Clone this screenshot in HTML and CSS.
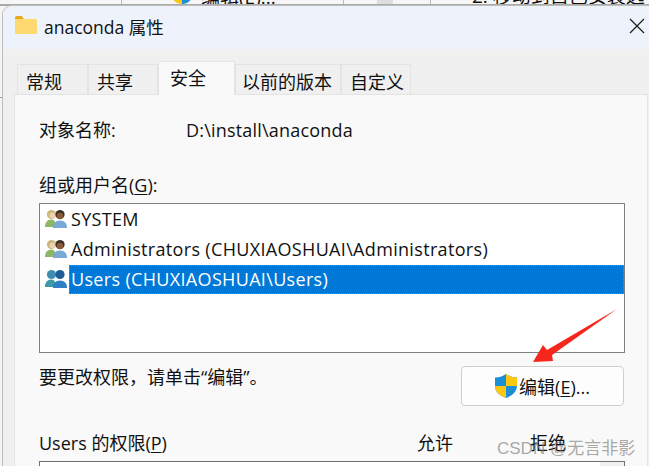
FILE: index.html
```html
<!DOCTYPE html>
<html>
<head>
  <title>anaconda 属性</title>
  <link rel="stylesheet" href="styles.css">
</head>
<body>
  <div class="behind">
    <span class="behind-line line-1"></span>
    <span class="behind-shield"></span>
    <span class="behind-edit">编辑(E)...</span>
    <span class="behind-line line-2"></span>
    <span class="behind-block"></span>
    <span class="behind-line line-3"></span>
    <span class="behind-step">2. 移动到自己安装选择</span>
  </div>
  <div class="behind-tick"></div>

  <div class="dialog">
    <div class="titlebar">
      <svg class="folder" width="22" height="18" viewBox="0 0 22 18">
        <path d="M0 1.5 Q0 0 1.5 0 H6.5 L8.5 2 V4 H0Z" fill="#eaa91c"/>
        <path d="M0 3 H20.5 Q22 3 22 4.5 V16.5 Q22 18 20.5 18 H1.5 Q0 18 0 16.5Z" fill="#fdd96f"/>
      </svg>
      <span class="title">anaconda 属性</span>
      <svg class="close" width="16" height="16" viewBox="0 0 16 16">
        <path d="M1 1 L15 15 M15 1 L1 15" stroke="#1a1a1a" stroke-width="1.2" fill="none"/>
      </svg>
    </div>

    <div class="tabs">
      <div class="tab tab-1">常规</div>
      <div class="tab tab-2">共享</div>
      <div class="tab tab-active">安全</div>
      <div class="tab tab-4">以前的版本</div>
      <div class="tab tab-5">自定义</div>
    </div>

    <div class="panel">
      <div class="object-row">
        <span class="object-label">对象名称:</span>
        <span class="object-path">D:\install\anaconda</span>
      </div>

      <div class="group-label">组或用户名(<u>G</u>):</div>
      <div class="user-list">
        <div class="user-row">
          <svg class="user-icon" width="22" height="20" viewBox="0 0 22 20">
            <circle cx="6.5" cy="5.5" r="4.6" fill="#cbb77a"/>
            <circle cx="7.5" cy="6.5" r="3" fill="#eed2ad"/>
            <path d="M0 18 Q0 10.5 6.5 10.5 Q11 10.5 11 18Z" fill="#8cb865"/>
            <circle cx="15" cy="5.5" r="4.6" fill="#3d3128"/>
            <circle cx="15" cy="7" r="3.2" fill="#8a5a3a"/>
            <path d="M8 19 Q8 11.5 15 11.5 Q22 11.5 22 19Z" fill="#79a9d6"/>
          </svg>
          <span class="user-name">SYSTEM</span>
        </div>
        <div class="user-row">
          <svg class="user-icon" width="22" height="20" viewBox="0 0 22 20">
            <circle cx="6.5" cy="5.5" r="4.6" fill="#cbb77a"/>
            <circle cx="7.5" cy="6.5" r="3" fill="#eed2ad"/>
            <path d="M0 18 Q0 10.5 6.5 10.5 Q11 10.5 11 18Z" fill="#8cb865"/>
            <circle cx="15" cy="5.5" r="4.6" fill="#3d3128"/>
            <circle cx="15" cy="7" r="3.2" fill="#8a5a3a"/>
            <path d="M8 19 Q8 11.5 15 11.5 Q22 11.5 22 19Z" fill="#79a9d6"/>
          </svg>
          <span class="user-name">Administrators (CHUXIAOSHUAI\Administrators)</span>
        </div>
        <div class="user-row">
          <svg class="user-icon" width="22" height="20" viewBox="0 0 22 20">
            <circle cx="6.5" cy="5.5" r="4.6" fill="#3f8db0"/>
            <path d="M0 18 Q0 10.5 6.5 10.5 Q11 10.5 11 18Z" fill="#3f9aa8"/>
            <circle cx="15" cy="5.5" r="4.6" fill="#1f5d96"/>
            <path d="M8 19 Q8 11.5 15 11.5 Q22 11.5 22 19Z" fill="#2f7fc4"/>
          </svg>
          <span class="user-name user-selected">Users (CHUXIAOSHUAI\Users)</span>
        </div>
      </div>

      <div class="edit-row">
        <span class="edit-hint">要更改权限，请单击“编辑”。</span>
        <button class="edit-button">
          <svg width="22" height="24" viewBox="0 0 22 24">
            <path d="M11 0 Q16 3.5 22 3.5 V12 Q22 20 11 24 Q0 20 0 12 V3.5 Q6 3.5 11 0Z" fill="#1b8fd6"/>
            <path d="M11 0 Q16 3.5 22 3.5 V12 H11Z" fill="#fdc80f"/>
            <path d="M0 12 H11 V24 Q0 20 0 12Z" fill="#fdc80f"/>
          </svg>
          <span>编辑(<u>E</u>)...</span>
        </button>
      </div>

      <div class="perm-head">
        <span class="perm-name">Users 的权限(<u>P</u>)</span>
        <span class="perm-allow">允许</span>
        <span class="perm-deny">拒绝</span>
      </div>
      <div class="perm-list">
        <div class="perm-scroll"></div>
      </div>
    </div>
  </div>

  <svg class="arrow" width="90" height="60" viewBox="0 0 90 60">
    <path d="M86 1 L21 47 L22 53 L2 54 L12 37 L16 42Z" fill="#f5261c"/>
  </svg>
  <div class="watermark">CSDN @无言非影</div>
</body>
</html>
```

FILE: styles.css
```css
html, body {
  margin: 0;
  padding: 0;
}
body {
  width: 649px;
  height: 466px;
  position: relative;
  overflow: hidden;
  background-color: #f4f4f4;
  font-family: "Open Sans", "Noto Sans CJK SC", sans-serif;
  font-size: 18px;
  color: #111;
}
u {
  text-underline-offset: 2px;
}
.behind {
  height: 4px;
  overflow: hidden;
  position: relative;
  border-bottom: 2px solid #a9a9a9;
  background-color: #f6f6f6;
}
.behind-line {
  position: absolute;
  top: 0;
  width: 1px;
  height: 5px;
  background-color: #bbb;
}
.line-1 { left: 121px; }
.line-2 { left: 343px; }
.line-3 { left: 430px; }
.behind-block {
  position: absolute;
  left: 377px;
  top: 0;
  width: 16px;
  height: 5px;
  background-color: #ddd;
}
.behind-shield {
  position: absolute;
  left: 171px;
  top: -18px;
  width: 22px;
  height: 22px;
  border-radius: 50%;
  background: linear-gradient(90deg, #fdc80f 50%, #1b8fd6 50%);
}
.behind-edit {
  position: absolute;
  left: 201px;
  top: -18px;
  font-size: 19px;
}
.behind-step {
  position: absolute;
  left: 472px;
  top: -19px;
  font-size: 19px;
}
.behind-tick {
  position: absolute;
  left: 0;
  top: 97px;
  width: 2px;
  height: 1px;
  background-color: #999;
}
.dialog {
  position: absolute;
  left: 2px;
  top: 5px;
  width: 660px;
  height: 480px;
  box-sizing: border-box;
  border: 1px solid #bdbdbd;
  border-radius: 10px 0 0 0;
  background-color: #f0f0f0;
  overflow: hidden;
}
.titlebar {
  height: 43px;
  display: flex;
  align-items: center;
  background-color: #eef3fb;
  padding-left: 12px;
  position: relative;
}
.folder {
  margin-right: 7px;
  margin-top: -6px;
}
.title {
  font-size: 17.5px;
  margin-top: -2px;
}
.close {
  position: absolute;
  left: 626px;
  top: 12px;
}
.tabs {
  display: flex;
  align-items: flex-end;
  height: 45px;
  padding-left: 14px;
}
.tab {
  box-sizing: border-box;
  height: 30px;
  border: 1px solid #e4e4e4;
  border-bottom: 0;
  line-height: 35px;
  background-color: #f0f0f0;
  white-space: nowrap;
}
.tab-1 { width: 71px; padding-left: 8px; }
.tab-2 { width: 70px; padding-left: 8px; }
.tab-active {
  width: 77px;
  height: 34px;
  margin-bottom: -1px;
  padding-left: 11px;
  line-height: 32px;
  background-color: #f9f9f9;
  position: relative;
  border-radius: 2px 2px 0 0;
}
.tab-4 { width: 106px; padding-left: 6px; }
.tab-5 { width: 70px; padding-left: 8px; }
.panel {
  width: 634px;
  height: 400px;
  margin-left: 11px;
  box-sizing: border-box;
  border: 1px solid #e4e4e4;
  background-color: #f9f9f9;
  padding: 0 24px;
}
.object-row {
  display: flex;
  padding-top: 22px;
  height: 45px;
  line-height: 26px;
  box-sizing: border-box;
}
.object-label {
  width: 147px;
}
.object-path {
  letter-spacing: 0.2px;
}
.group-label {
  margin-top: 32px;
  height: 26px;
  line-height: 26px;
}
.user-list {
  box-sizing: border-box;
  width: 586px;
  height: 150px;
  margin-top: 5px;
  border: 1px solid #7f7f86;
  background-color: #fff;
}
.user-row {
  height: 30px;
  display: flex;
  align-items: center;
  padding-left: 5px;
}
.user-icon {
  flex: none;
  margin-right: 2px;
}
.user-name {
  padding: 0 2px;
  line-height: 29px;
  letter-spacing: 0.33px;
  white-space: nowrap;
}
.user-selected {
  flex: 1;
  background-color: #0078d7;
  color: #fff;
  outline: 1px dotted #c77a2a;
  outline-offset: -1px;
}
.edit-row {
  display: flex;
  justify-content: space-between;
  align-items: flex-start;
  width: 585px;
  margin-top: 11px;
}
.edit-hint {
  line-height: 26px;
}
.edit-button {
  box-sizing: border-box;
  width: 163px;
  height: 40px;
  margin-top: 2px;
  display: flex;
  align-items: center;
  justify-content: center;
  gap: 2px;
  border: 1px solid #cfcfcf;
  border-radius: 4px;
  background-color: #fdfdfd;
  font: inherit;
  color: inherit;
  padding: 0;
}
.perm-head {
  display: flex;
  height: 26px;
  line-height: 26px;
  margin-top: 24px;
}
.perm-name { width: 378px; }
.perm-allow { width: 113px; }
.perm-list {
  box-sizing: border-box;
  width: 586px;
  height: 60px;
  margin-top: 5px;
  border: 1px solid #6f6f76;
  background-color: #fff;
  display: flex;
  justify-content: flex-end;
}
.perm-scroll {
  width: 24px;
  background-color: #f0f0f0;
}
.arrow {
  position: absolute;
  left: 531px;
  top: 308px;
}
.watermark {
  position: absolute;
  left: 497px;
  top: 434px;
  font-family: "Liberation Sans", "Noto Sans CJK SC", sans-serif;
  font-size: 17px;
  color: rgba(120, 120, 120, 0.65);
}
```
